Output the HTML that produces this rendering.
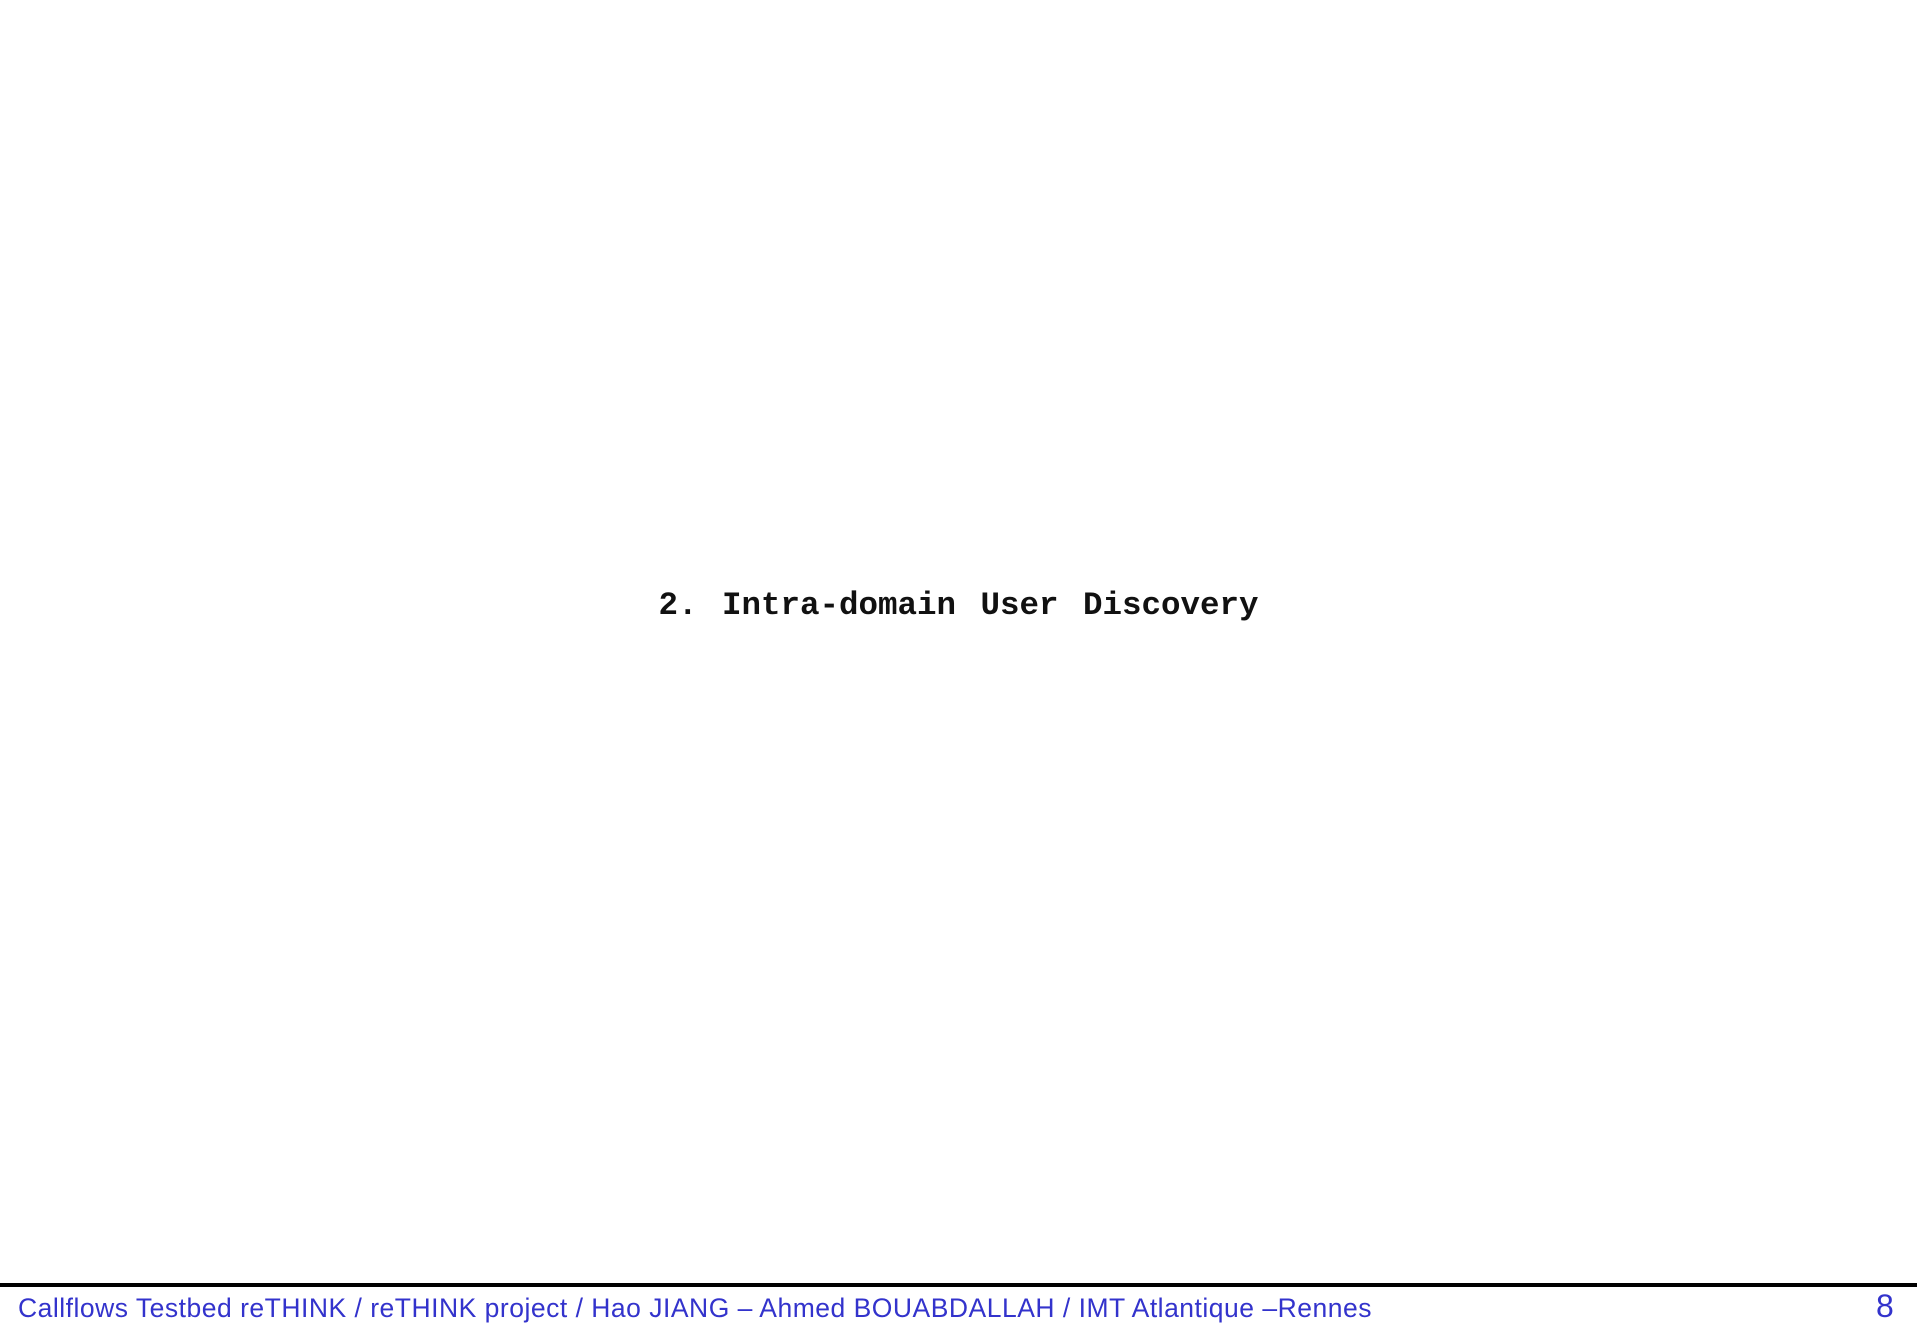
<!DOCTYPE html>
<html><head><meta charset="utf-8"><style>
html,body{margin:0;padding:0;background:#fff;width:1917px;height:1334px;overflow:hidden;position:relative}
.t{position:absolute;left:0;width:1917px;top:586px;text-align:center;font:bold 32.5px "Liberation Mono",monospace;color:#111;white-space:pre;line-height:40px;word-spacing:5px}
.line{position:absolute;left:0;top:1283px;width:1917px;height:4px;background:#000}
.f{position:absolute;left:18px;top:1292px;font:26.5px "Liberation Sans",sans-serif;color:#3333cc;white-space:pre;line-height:32px;letter-spacing:0.5px}
.n{position:absolute;left:1876px;top:1288px;font:32px "Liberation Sans",sans-serif;color:#3333cc;line-height:36px}
</style></head><body>
<div class="t">2. Intra-domain User Discovery</div>
<div class="line"></div>
<div class="f">Callflows Testbed reTHINK / reTHINK project / Hao JIANG – Ahmed BOUABDALLAH / IMT Atlantique –Rennes</div>
<div class="n">8</div>
</body></html>
